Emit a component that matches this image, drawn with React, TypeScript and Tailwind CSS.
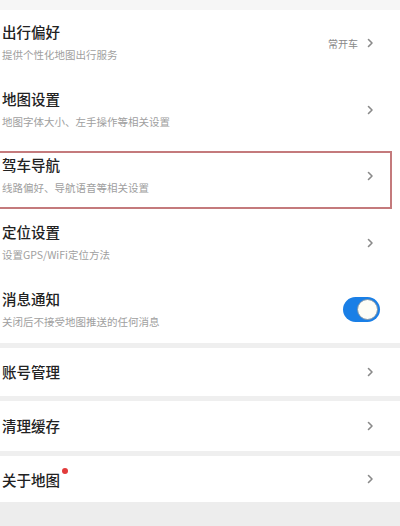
const font = { fontFamily: '"Noto Sans CJK SC", "Noto Sans", sans-serif' }

function Chevron() {
  return (
    <svg width="7" height="10" viewBox="0 0 7 10" className="shrink-0">
      <polyline points="1.5,1.5 5,5 1.5,8.5" fill="none" stroke="#8a8a8a" strokeWidth="1.6" strokeLinecap="round" strokeLinejoin="round" />
    </svg>
  )
}

function Toggle() {
  return (
    <div className="w-[37px] h-[25px] rounded-full bg-[#1a7fe6] flex items-center justify-end pr-[2px]">
      <div className="w-[21px] h-[21px] rounded-full bg-[#fdfdf6] border border-[#7f95a8]" />
    </div>
  )
}

type Item = { title: string; sub: string; extra?: string; toggle?: boolean; boxed?: boolean }

const items: Item[] = [
  { title: '出行偏好', sub: '提供个性化地图出行服务', extra: '常开车' },
  { title: '地图设置', sub: '地图字体大小、左手操作等相关设置' },
  { title: '驾车导航', sub: '线路偏好、导航语音等相关设置', boxed: true },
  { title: '定位设置', sub: '设置GPS/WiFi定位方法' },
  { title: '消息通知', sub: '关闭后不接受地图推送的任何消息', toggle: true },
]

export default function App() {
  return (
    <div className="w-[400px] h-[526px] bg-white overflow-hidden" style={font}>
      <div className="h-[10px] bg-[#f6f6f6]" />

      {/* TWO-LINE ROWS */}
      {items.map((it) => (
        <div key={it.title} className="relative h-[66.6px] flex items-center pl-[2px] pr-[26px]">
          <div className="flex-1 flex flex-col gap-[6px] -mt-[2px]">
            <p className="text-[14.5px] leading-[20px] font-medium text-[#222]">{it.title}</p>
            <p className="text-[10.5px] leading-[14px] text-[#a0a0a0]">{it.sub}</p>
          </div>
          {it.toggle ? (
            <div className="-mr-[6px]"><Toggle /></div>
          ) : (
            <div className="flex items-center gap-[9px]">
              {it.extra && <span className="text-[10px] text-[#888]">{it.extra}</span>}
              <Chevron />
            </div>
          )}
          {it.boxed && (
            <div className="absolute left-[-2px] right-[8px] top-[8px] bottom-[1px] border-2 border-[#c47a7c]" />
          )}
        </div>
      ))}

      {/* SINGLE-LINE ROWS */}
      <div className="h-[5px] bg-[#efefef]" />
      <div className="h-[48px] flex items-center pl-[2px] pr-[26px]">
        <p className="flex-1 text-[14.5px] font-medium text-[#222]">账号管理</p>
        <Chevron />
      </div>
      <div className="h-[5px] bg-[#efefef]" />
      <div className="h-[50px] flex items-center pl-[2px] pr-[26px]">
        <p className="flex-1 text-[14.5px] font-medium text-[#222]">清理缓存</p>
        <Chevron />
      </div>
      <div className="h-[5px] bg-[#efefef]" />
      <div className="h-[46px] flex items-center pl-[2px] pr-[26px]">
        <div className="flex-1">
          <span className="relative text-[14.5px] font-medium text-[#222]">
            关于地图
            <span className="absolute -right-[8px] top-[-1px] w-[6px] h-[6px] rounded-full bg-[#e23b3b]" />
          </span>
        </div>
        <Chevron />
      </div>
      <div className="h-[30px] bg-[#ededed]" />
    </div>
  )
}
